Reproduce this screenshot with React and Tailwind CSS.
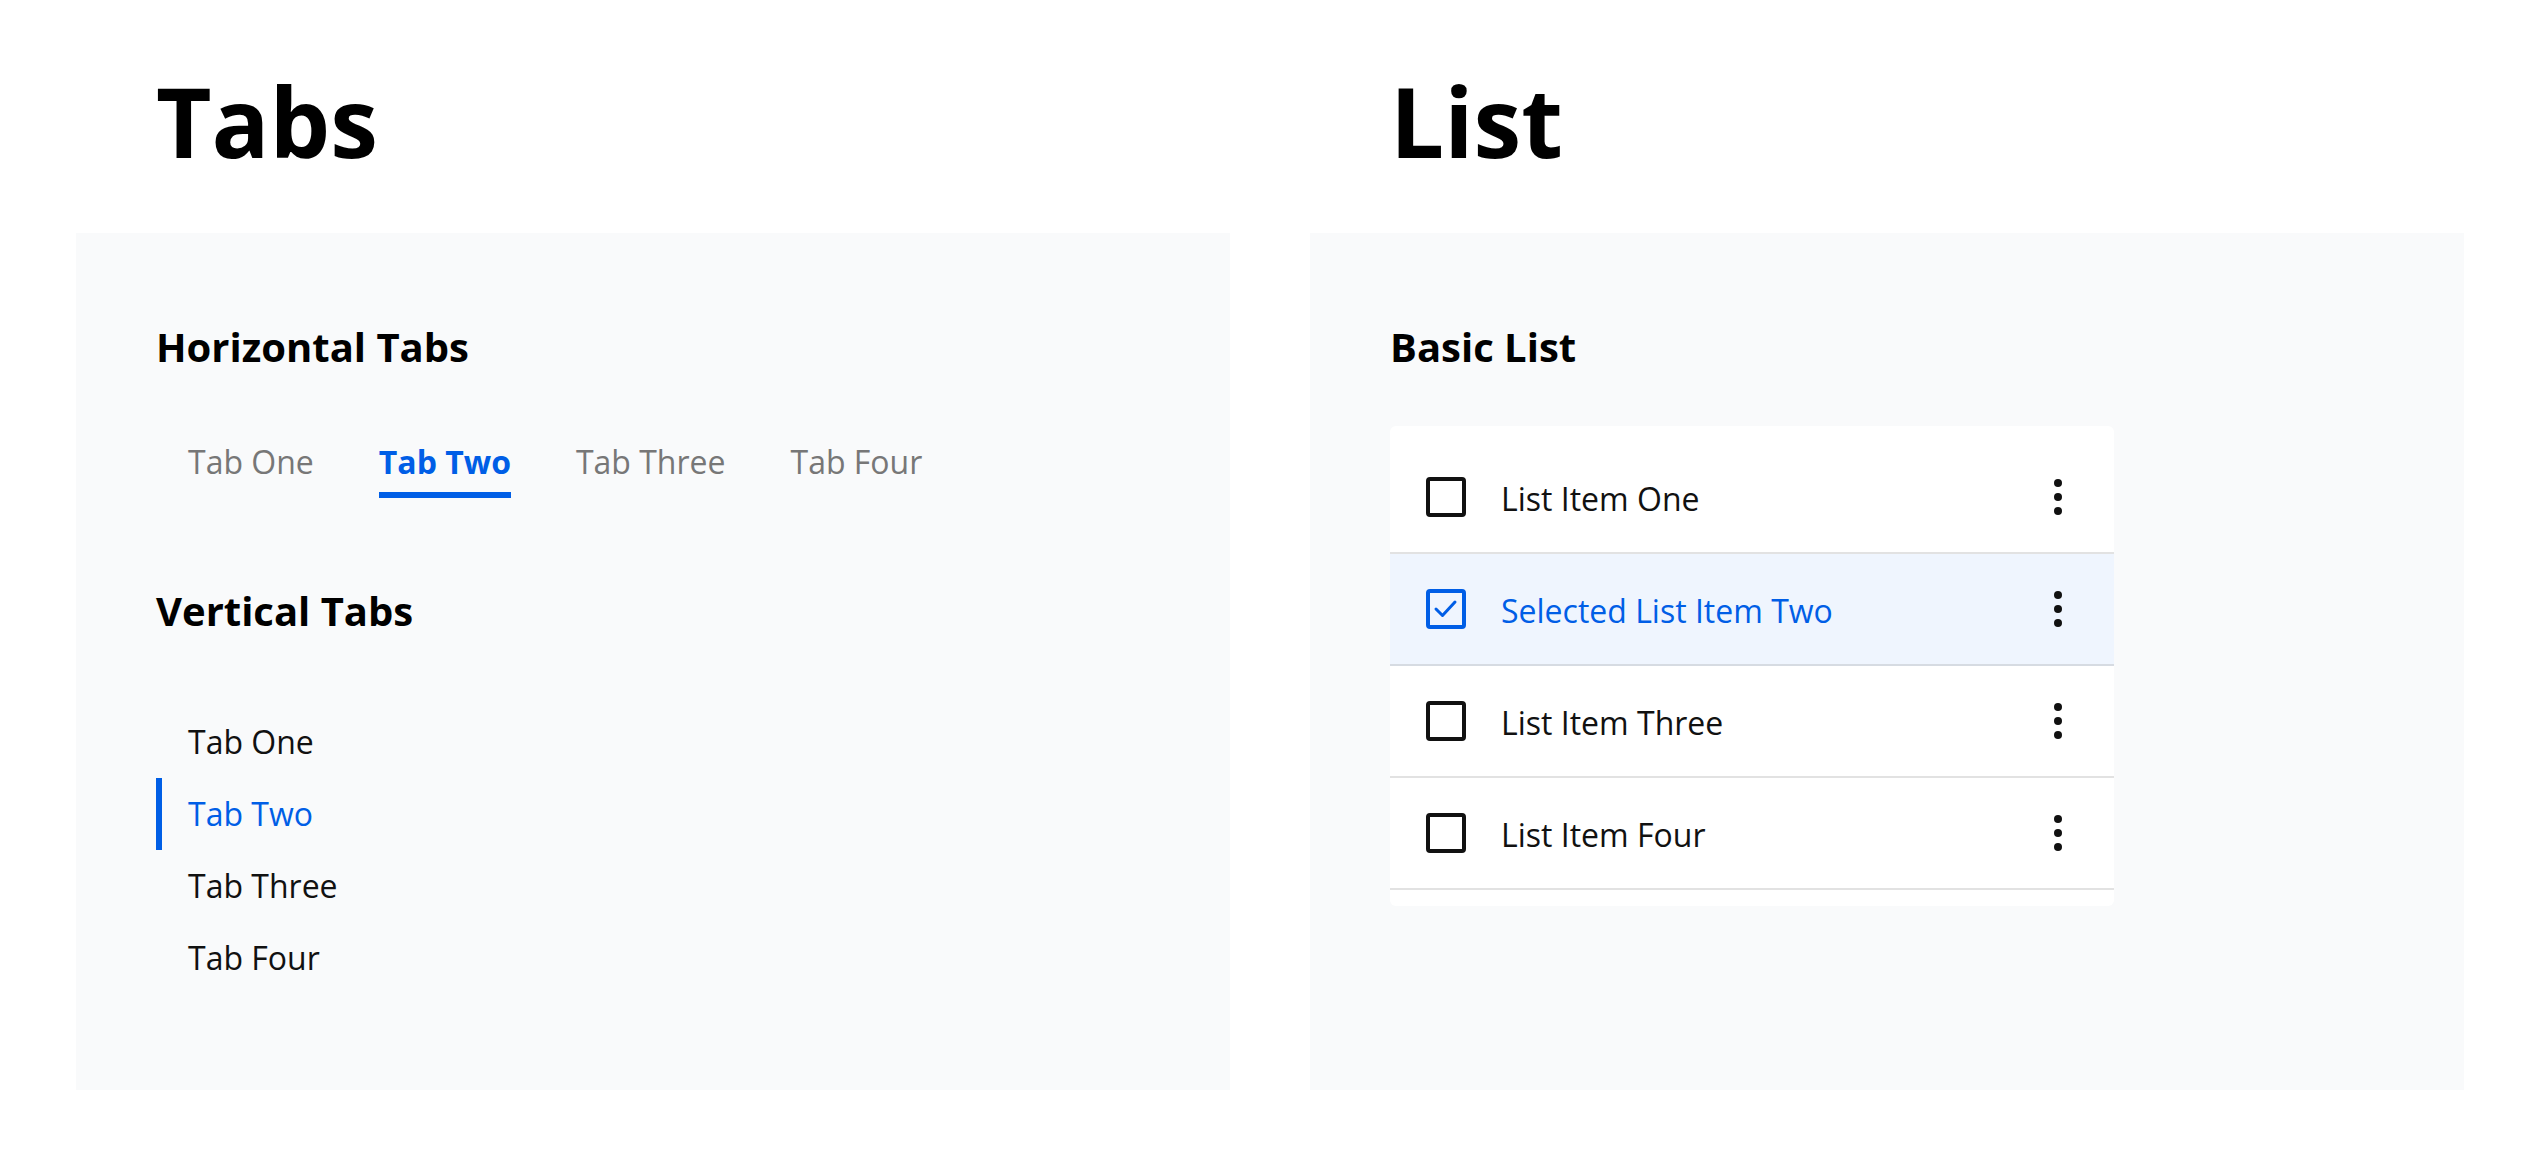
import React from "react";

const BLUE = "text-[#005ee6]";

function Kebab() {
  return (
    <svg width="48" height="48" viewBox="0 0 48 48" className="ml-auto shrink-0">
      <circle cx="24" cy="10" r="4" fill="#111" />
      <circle cx="24" cy="24" r="4" fill="#111" />
      <circle cx="24" cy="38" r="4" fill="#111" />
    </svg>
  );
}

function Checkbox({ checked }) {
  if (checked) {
    return (
      <div className="w-[40px] h-[40px] shrink-0 border-[4px] border-[#005ee6] rounded-[4px] flex items-center justify-center">
        <svg width="32" height="32" viewBox="0 0 32 32">
          <polyline points="6,16 12.5,22.5 25,9" fill="none" stroke="#005ee6" strokeWidth="3" strokeLinecap="round" strokeLinejoin="round" />
        </svg>
      </div>
    );
  }
  return <div className="w-[40px] h-[40px] shrink-0 border-[4px] border-[#111] rounded-[4px]" />;
}

function ListRow({ label, selected }) {
  return (
    <div
      className={
        "h-[112px] flex items-center pl-[36px] pr-[32px] border-b-2 " +
        (selected ? "bg-[#eff5fe] border-[#d6dbe2]" : "bg-white border-[#e2e2e2]")
      }
    >
      <Checkbox checked={selected} />
      <span className={"ml-[35px] pt-[3px] text-[32px] leading-[48px] " + (selected ? BLUE : "text-[#111]")}>{label}</span>
      <Kebab />
    </div>
  );
}

export default function App() {
  const hTabs = ["Tab One", "Tab Two", "Tab Three", "Tab Four"];
  return (
    <div className="min-h-screen bg-white font-['Open_Sans',sans-serif] flex gap-[80px] pl-[76px] pt-[73px]">
      {/* Tabs column */}
      <div className="w-[1154px] shrink-0">
        <h1 className="pl-[80px] text-[96px] font-bold leading-[96px] text-black mb-[64px]">Tabs</h1>
        <div className="bg-[#f9fafb] h-[857px] pt-[80px] px-[80px]">
          <h2 className="text-[40px] font-bold leading-[68px] text-black">Horizontal Tabs</h2>
          <div className="flex mt-[57px]">
            {hTabs.map((t, i) => (
              <div key={t} className="pl-[32px] pr-[33px]">
                <span
                  className={
                    "block text-[32px] leading-[48px] pb-[6px] border-b-[6px] " +
                    (i === 1 ? "font-bold text-[#005ee6] border-[#005ee6]" : "text-[#777] border-transparent")
                  }
                >
                  {t}
                </span>
              </div>
            ))}
          </div>
          <h2 className="text-[40px] font-bold leading-[68px] text-black mt-[79px]">Vertical Tabs</h2>
          <div className="flex flex-col mt-[61px]">
            {hTabs.map((t, i) => (
              <div
                key={t}
                className={
                  "h-[72px] flex items-center border-l-[6px] pl-[26px] text-[32px] " +
                  (i === 1 ? "border-[#005ee6] text-[#005ee6]" : "border-transparent text-[#111]")
                }
              >
                {t}
              </div>
            ))}
          </div>
        </div>
      </div>

      {/* List column */}
      <div className="w-[1154px] shrink-0">
        <h1 className="pl-[80px] text-[96px] font-bold leading-[96px] text-black mb-[64px]">List</h1>
        <div className="bg-[#f9fafb] h-[857px] pt-[80px] px-[80px]">
          <h2 className="text-[40px] font-bold leading-[68px] text-black">Basic List</h2>
          <div className="mt-[45px] w-[724px] bg-white rounded-[6px] py-[16px]">
            <ListRow label="List Item One" />
            <ListRow label="Selected List Item Two" selected />
            <ListRow label="List Item Three" />
            <ListRow label="List Item Four" />
          </div>
        </div>
      </div>
    </div>
  );
}
